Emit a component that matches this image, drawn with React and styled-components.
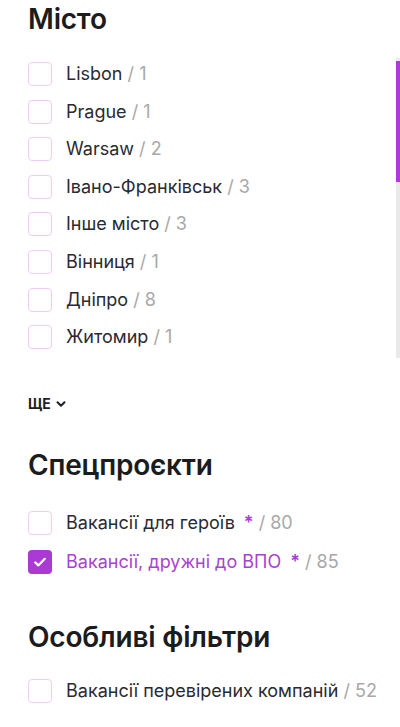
import styled, { createGlobalStyle } from 'styled-components';

const cities = [
  ['Lisbon', 1],
  ['Prague', 1],
  ['Warsaw', 2],
  ['Івано-Франківськ', 3],
  ['Інше місто', 3],
  ['Вінниця', 1],
  ['Дніпро', 8],
  ['Житомир', 1],
];

const GlobalStyle = createGlobalStyle`
  body {
    margin: 0;
    background: #ffffff;
    font-family: Inter, 'Noto Sans', sans-serif;
    color: #26262c;
  }
`;

function Checkbox({ checked }) {
  return (
    <Box checked={checked}>
      {checked && (
        <svg width="16" height="16" viewBox="0 0 16 16" fill="none">
          <path
            d="M3.2 8.4l3.1 3 6.5-6.6"
            stroke="#fff"
            strokeWidth="2.2"
            strokeLinecap="round"
            strokeLinejoin="round"
          />
        </svg>
      )}
    </Box>
  );
}

function Option({ label, count, star, checked }) {
  return (
    <Row>
      <Checkbox checked={checked} />
      <Label checked={checked}>
        {label}
        {star && <Star>*</Star>}
        <Count> / {count}</Count>
      </Label>
    </Row>
  );
}

export default function App() {
  return (
    <Page>
      <GlobalStyle />
      <Section>
        <Title>Місто</Title>
        <ScrollArea>
          <ScrollList>
            {cities.map(([name, n]) => (
              <Option key={name} label={name} count={n} />
            ))}
          </ScrollList>
          <Track>
            <Thumb />
          </Track>
        </ScrollArea>
        <More>
          ЩЕ
          <svg width="12" height="12" viewBox="0 0 12 12" fill="none">
            <path
              d="M2.5 4.3L6 7.8l3.5-3.5"
              stroke="#1f1f24"
              strokeWidth="2"
              strokeLinecap="round"
              strokeLinejoin="round"
            />
          </svg>
        </More>
      </Section>

      <Section>
        <Title>Спецпроєкти</Title>
        <List top={7} bottom={10}>
          <Option label="Вакансії для героїв" count={80} star />
          <Option label="Вакансії, дружні до ВПО" count={85} star checked />
        </List>
      </Section>

      <Section>
        <Title>Особливі фільтри</Title>
        <List top={3}>
          <Option label="Вакансії перевірених компаній" count={52} />
        </List>
      </Section>
    </Page>
  );
}

const Page = styled.div`
  display: flex;
  flex-direction: column;
  gap: 34px;
  padding-left: 28px;
`;

const Section = styled.section`
  display: flex;
  flex-direction: column;
`;

const Title = styled.h2`
  margin: 0 0 20px;
  font-size: 28px;
  line-height: 38px;
  font-weight: 600;
  color: #1c1c20;
  letter-spacing: -0.2px;
`;

const ScrollArea = styled.div`
  display: flex;
  height: 300px;
`;

const ScrollList = styled.div`
  flex: 1;
  display: flex;
  flex-direction: column;
  gap: 13.6px;
  padding-top: 4px;
  overflow: hidden;
`;

const Track = styled.div`
  width: 4px;
  flex-shrink: 0;
  background: #e9e9e9;
  padding-top: 3px;
  box-sizing: border-box;
`;

const Thumb = styled.div`
  height: 121px;
  background: #ad3bd8;
`;

const List = styled.div`
  display: flex;
  flex-direction: column;
  gap: 15px;
  padding-top: ${(p) => p.top || 0}px;
  padding-bottom: ${(p) => p.bottom || 0}px;
`;

const Row = styled.label`
  display: flex;
  align-items: center;
  gap: 14px;
  flex-shrink: 0;
  cursor: pointer;
`;

const Box = styled.span`
  width: 24px;
  height: 24px;
  box-sizing: border-box;
  flex-shrink: 0;
  border-radius: 4px;
  display: flex;
  align-items: center;
  justify-content: center;
  border: ${(p) => (p.checked ? 'none' : '1.5px solid #efcdf7')};
  background: ${(p) => (p.checked ? '#a93ad3' : '#fff')};
`;

const Label = styled.span`
  font-size: 18px;
  line-height: 24px;
  color: ${(p) => (p.checked ? '#aa42d0' : '#2a2a31')};
  white-space: nowrap;
`;

const Star = styled.span`
  color: #a93ad3;
  margin-left: 9px;
  font-weight: 600;
`;

const Count = styled.span`
  color: #a8a8a8;
`;

const More = styled.button`
  align-self: flex-start;
  display: flex;
  align-items: center;
  gap: 4px;
  margin-top: 37px;
  padding: 0;
  border: none;
  background: none;
  font-family: Inter, sans-serif;
  font-size: 14px;
  font-weight: 700;
  color: #1f1f24;
`;
